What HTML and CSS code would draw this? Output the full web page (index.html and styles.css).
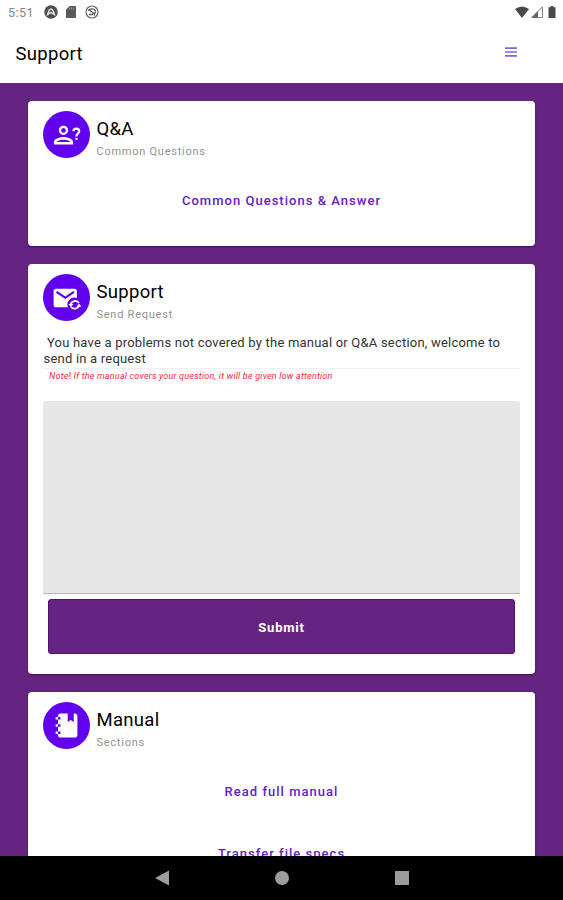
FILE: index.html
```
<!DOCTYPE html>
<html lang="en">
<head>
  <meta charset="UTF-8">
  <meta name="viewport" content="width=device-width, initial-scale=1.0">
  <title>Support</title>
  <link rel="stylesheet" href="styles.css">
</head>
<body>
  <div class="status-bar">
    <span class="time">5:51</span>
    <svg class="status-icon" viewBox="0 0 14 14">
      <circle cx="7" cy="7" r="6.8" fill="#505050"/>
      <path d="M3.600 9.600Q5 4 7 4t3.400 5.600L7 7.300z" fill="none" stroke="#ddd" stroke-width="1.500"/>
    </svg>
    <svg class="status-icon sd" viewBox="0 0 10 12">
      <path d="M3.500 0H9a1 1 0 0 1 1 1v10a1 1 0 0 1-1 1H1a1 1 0 0 1-1-1V3.500z" fill="#5a5a5a"/>
      <path d="M3.500 1.500v2M5.500 1.500v2M7.500 1.500v2" stroke="#aaa" stroke-width=".8"/>
    </svg>
    <svg class="status-icon" viewBox="0 0 14 14">
      <circle cx="7" cy="7" r="6" fill="none" stroke="#666" stroke-width="1.200"/>
      <path d="M3 5.500C5.500 3.200 9 3.400 10.800 6.200M4 4.500l6 5M10.500 6.500 9 10.500M4 9.500h4" fill="none" stroke="#555" stroke-width="1.300"/>
    </svg>
    <div class="status-right">
      <svg class="wifi" viewBox="0 0 14 12"><path d="M0 3Q7-2 14 3L7 12z" fill="#4a4a4a"/></svg>
      <svg class="signal" viewBox="0 0 12 12">
        <path d="M.8 11.500 11.500.8v10.700z" fill="none" stroke="#777" stroke-width=".9"/>
        <path d="M.5 11.700 7 5v6.700z" fill="#666"/>
      </svg>
      <svg class="battery" viewBox="0 0 8 12"><path d="M2.500 0h3v1.200H7.500V12H.5V1.200h2z" fill="#4a4a4a"/></svg>
    </div>
  </div>
  <div class="app-bar">
    <h1>Support</h1>
    <svg class="menu" viewBox="0 0 12 10"><path d="M0 1.200h12M0 5h12M0 8.800h12" stroke="#8464d8" stroke-width="1.700"/></svg>
  </div>

  <div class="content">
    <div class="card qa">
      <div class="card-title">
        <div class="avatar">
          <svg viewBox="0 0 24 24">
            <path d="M13 8c0-2.210-1.790-4-4-4S5 5.790 5 8s1.790 4 4 4 4-1.790 4-4m-2 0c0 1.100-.9 2-2 2s-2-.9-2-2 .9-2 2-2 2 .9 2 2M.8 18v2.200h16.400V18c0-2.660-5.330-4.200-8.200-4.200S.8 15.340.8 18m2.200 0c.2-.710 3.300-2 6-2 2.690 0 5.780 1.280 6 2"/>
            <path d="M17.500 8.800c0-3 5-3 5 0 0 1.900-2.400 1.800-2.400 4.400M20.100 14.400v1.800" fill="none" stroke="#fff" stroke-width="1.800"/>
          </svg>
        </div>
        <div class="titles">
          <h2>Q&amp;A</h2>
          <p class="qa-sub">Common Questions</p>
        </div>
      </div>
      <a class="link">Common Questions &amp; Answer</a>
    </div>

    <div class="card support">
      <div class="card-title">
        <div class="avatar">
          <svg viewBox="0 0 24 24">
            <path d="M2.500 4h16c1.100 0 2 .9 2 2v6.100a6 6 0 0 0-7.700 7.900H2.500c-1.100 0-2-.9-2-2V6c0-1.100.9-2 2-2"/>
            <path d="m3 6.700 7.500 5 7.500-5" fill="none" stroke="#6200ee" stroke-width="1.800"/>
            <path d="M22.200 16.300a3.800 3.800 0 0 0-7 1.700M15.400 19.500a3.800 3.800 0 0 0 6.800-1" fill="none" stroke="#fff" stroke-width="1.500"/>
            <path d="M13.200 17.200h4.200l-2.100 2.500zM20.200 19.400h4l-2-2.700z"/>
          </svg>
        </div>
        <div class="titles">
          <h2>Support</h2>
          <p>Send Request</p>
        </div>
      </div>
      <p class="message">&nbsp;You have a problems not covered by the manual or Q&amp;A section, welcome to<br>send in a request</p>
      <p class="note">Note! If the manual covers your question, it will be given low attention</p>
      <div class="request"></div>
      <div class="submit">Submit</div>
    </div>

    <div class="card manual">
      <div class="card-title">
        <div class="avatar">
          <svg class="notebook" viewBox="0 0 24 24"><path d="M3 7V5h2V4a2 2 0 0 1 2-2h6v7l2.500-1.500L18 9V2h1c1.050 0 2 .95 2 2v16c0 1.050-.95 2-2 2H7c-1.050 0-2-.95-2-2v-1H3v-2h2v-4H3v-2h2V7zm2-2v2h2V5zm0 14h2v-2H5zm0-6h2v-2H5z"/></svg>
        </div>
        <div class="titles">
          <h2>Manual</h2>
          <p>Sections</p>
        </div>
      </div>
      <a class="link">Read full manual</a>
      <a class="link">Transfer file specs</a>
    </div>
  </div>

  <div class="nav-bar">
    <svg viewBox="0 0 16 16"><path d="M1 8 15 .5v15z"/></svg>
    <svg viewBox="0 0 16 16"><circle cx="8" cy="8" r="7"/></svg>
    <svg viewBox="0 0 16 16"><path d="M1 1h14v14H1z"/></svg>
  </div>
</body>
</html>
```
FILE: styles.css
```
* {
  box-sizing: border-box;
}
body {
  margin: 0;
  height: 900px;
  display: flex;
  flex-direction: column;
  overflow: hidden;
  font-family: Roboto, sans-serif;
  background-color: #652482;
}
h1, h2, p {
  margin: 0;
  font-weight: normal;
}
svg {
  display: block;
}
.status-bar {
  flex: none;
  height: 24px;
  padding: 0 7px 0 8px;
  display: flex;
  align-items: center;
  background-color: #fff;
}
.time {
  width: 36px;
  font-size: 12.5px;
  letter-spacing: 0.5px;
  color: #858585;
}
.status-icon {
  width: 14px;
  height: 14px;
  margin-right: 8px;
}
.status-icon.sd {
  width: 10px;
  height: 12px;
  margin-right: 9px;
}
.status-right {
  margin-left: auto;
  display: flex;
  align-items: center;
}
.wifi {
  width: 14px;
  height: 12px;
}
.signal {
  width: 12px;
  height: 12px;
  margin: 0 5px 0 2px;
}
.battery {
  width: 8px;
  height: 12px;
}
.app-bar {
  flex: none;
  height: 59px;
  padding: 0 46px 0 15.5px;
  display: flex;
  align-items: center;
  justify-content: space-between;
  background-color: #fff;
}
.app-bar h1 {
  font-size: 18.5px;
  letter-spacing: 0.3px;
  color: #000;
}
.menu {
  width: 12px;
  height: 10px;
  margin-bottom: 3px;
}
.content {
  flex: 1;
  min-height: 0;
  overflow: hidden;
  padding: 18px 28px 0;
  display: flex;
  flex-direction: column;
  gap: 18px;
}
.card {
  flex: none;
  padding: 10px 15px 0;
  background-color: #fff;
  border-radius: 4px;
  box-shadow: 0 1px 2px rgba(50, 0, 80, 0.7);
}
.qa {
  height: 145px;
}
.support {
  height: 410px;
}
.manual {
  height: 230px;
}
.card-title {
  display: flex;
  align-items: flex-start;
  height: 48px;
}
.avatar {
  width: 47px;
  height: 47px;
  border-radius: 50%;
  background-color: #6200ee;
  display: flex;
  align-items: center;
  justify-content: center;
}
.avatar svg {
  width: 28px;
  height: 28px;
  fill: #fff;
}
.avatar .notebook {
  width: 29px;
  height: 29px;
}
.titles {
  margin: 6px 0 0 6.500px;
}
.titles h2 {
  font-size: 18.5px;
  line-height: 24px;
  letter-spacing: 0.3px;
  color: #000;
}
.titles p {
  margin-top: 2px;
  font-size: 11px;
  line-height: 18px;
  letter-spacing: 0.75px;
  color: #929292;
}
.link {
  display: block;
  height: 62px;
  line-height: 62px;
  text-align: center;
  font-size: 13px;
  font-weight: 500;
  letter-spacing: 1.02px;
  color: #6420cc;
}
.card-title + .link {
  margin-top: 11px;
}
.message {
  margin-top: 13px;
  height: 34px;
  border-bottom: 1px solid #f0f0f0;
  padding-left: 0.5px;
  font-size: 13px;
  line-height: 16px;
  letter-spacing: 0.21px;
  color: #333;
  white-space: nowrap;
}
.note {
  padding-left: 6px;
  height: 32px;
  line-height: 14px;
  font-size: 9px;
  font-style: italic;
  letter-spacing: 0.21px;
  color: #f02c3c;
}
.request {
  height: 193px;
  background-color: #e7e7e7;
  border-bottom: 1px solid #b5b5b5;
  border-radius: 3px 3px 0 0;
}
.submit {
  height: 55px;
  margin: 5px 5px 0;
  border-radius: 3px;
  background-color: #652482;
  border: 1px solid #52106f;
  color: #fff;
  font-size: 13px;
  font-weight: 700;
  line-height: 55px;
  letter-spacing: 0.8px;
  text-align: center;
}
.nav-bar {
  flex: none;
  height: 44px;
  display: flex;
  align-items: center;
  justify-content: center;
  gap: 104px;
  background-color: #000;
}
.nav-bar svg {
  width: 16px;
  height: 16px;
  fill: #9c9c9c;
}
```
